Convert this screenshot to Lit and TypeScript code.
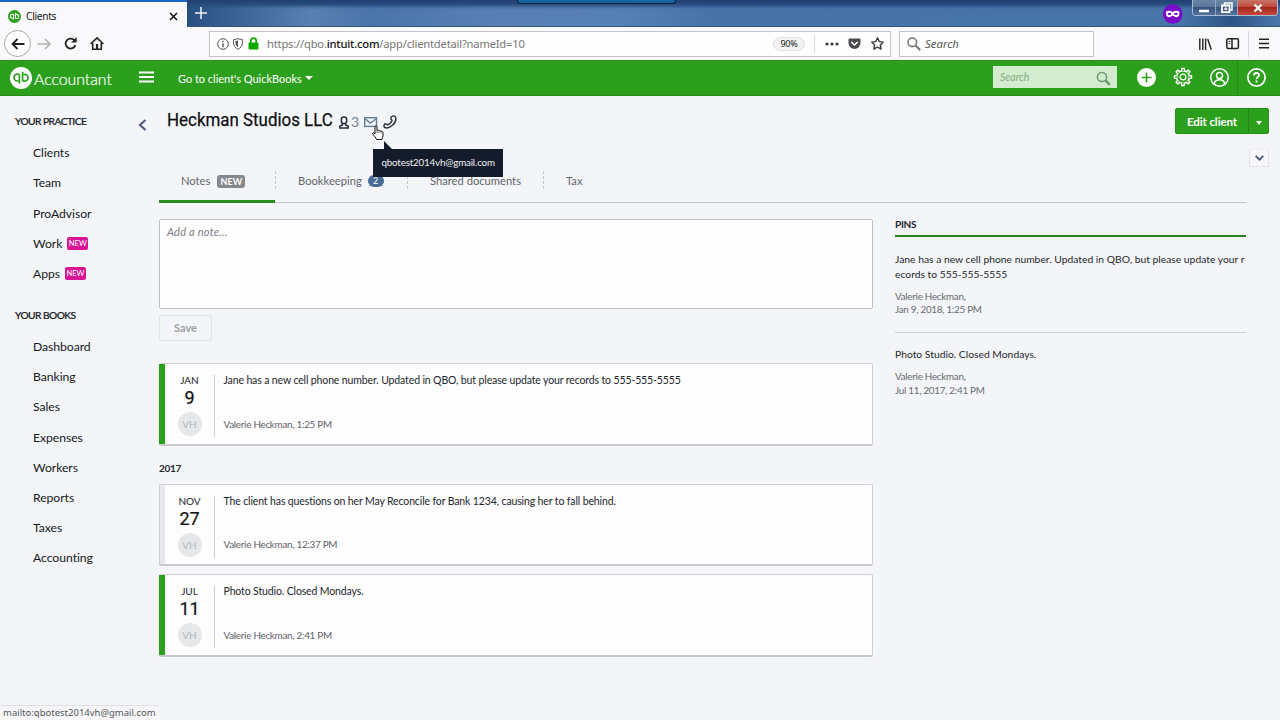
import { LitElement, html, css, svg } from 'lit';
import { customElement, property } from 'lit/decorators.js';
import { classMap } from 'lit/directives/class-map.js';

const base = css`
  :host {
    display: block;
    box-sizing: border-box;
    font-family: Lato, "Liberation Sans", sans-serif;
    color: #24272c;
    white-space: nowrap;
  }
  *, *::before, *::after {
    box-sizing: border-box;
  }
  svg {
    display: block;
    flex: none;
    overflow: visible;
  }
`;

const qbMark = (bg: string, fg: string) => svg`
  <circle cx="11" cy="11" r="11" fill=${bg}/>
  <g fill="none" stroke=${fg} stroke-width="1.7">
    <path d="M9.2 7.2H7.4a3.4 3.4 0 0 0 0 6.8h1.4"/>
    <path d="M9.4 7.2v9.4"/>
    <path d="M12.8 14.2h1.8a3.4 3.4 0 0 0 0-6.8h-1.4"/>
    <path d="M12.6 14.2V4.8"/>
  </g>
`;

@customElement('browser-chrome')
class BrowserChrome extends LitElement {
  static styles = [base, css`
    :host {
      font-family: "Noto Sans", sans-serif;
    }
    .titlebar {
      position: relative;
      display: flex;
      height: 27px;
      border-bottom: 1px solid #2f5486;
      background:
        linear-gradient(180deg, #203f70 0, #274a7c 4px, rgba(70, 112, 164, 0) 9px),
        linear-gradient(90deg, #274f80 187px, #5a80b3 310px, #4a74aa 370px, #5880b5 500px, #5580b6 620px, #4672a8 720px, #4775a9 1180px, #2d5487 1230px, #4c76ab 1280px);
    }
    .tab {
      display: flex;
      align-items: center;
      width: 187px;
      height: 28px;
      padding: 2px 9px 0 8px;
      border-top: 2px solid #1a66c2;
      background: #f9f9fb;
      font-size: 10.2px;
      letter-spacing: -0.3px;
      color: #111;
    }
    .tab .name {
      flex: 1;
      padding-left: 5px;
    }
    .plus {
      margin: 7px 0 0 8px;
    }
    .recorder {
      position: absolute;
      left: 517px;
      top: 0;
      width: 159px;
      height: 4px;
      border: 1px solid #0d1f33;
      border-top: 0;
      border-radius: 0 0 3px 3px;
      background: #1565a5;
    }
    .mask {
      position: absolute;
      left: 1163px;
      top: 4px;
    }
    .window {
      position: absolute;
      left: 1192px;
      top: 0;
      display: flex;
      height: 16px;
      width: 86px;
      border: 1px solid #a9bcd3;
      border-top: 0;
      border-radius: 0 0 4px 4px;
      overflow: hidden;
    }
    .window span {
      display: flex;
      justify-content: center;
      align-items: center;
      width: 23px;
      border-right: 1px solid #8fa6c2;
      background: linear-gradient(180deg, #6d85a5 0, #5a7599 45%, #38547c 50%, #52749f 100%);
    }
    .window span.x {
      width: 39px;
      border-right: 0;
      background: linear-gradient(180deg, #c9746a 0, #bd4a3e 45%, #a5271d 50%, #c6493a 100%);
    }
    .toolbar {
      display: flex;
      align-items: center;
      height: 33px;
      background: #f9f9fb;
      padding-left: 4px;
    }
    .back {
      display: flex;
      align-items: center;
      justify-content: center;
      width: 27px;
      height: 27px;
      border: 1px solid #a8a8aa;
      border-radius: 50%;
      background: #fdfdfd;
    }
    .forward {
      margin-left: 6px;
    }
    .reload {
      margin-left: 13px;
    }
    .home {
      margin-left: 13px;
    }
    .field {
      display: flex;
      align-items: center;
      height: 26px;
      border: 1px solid #c3c3c8;
      background: #fefefe;
    }
    .url {
      width: 682px;
      margin-left: 105px;
      padding-left: 7px;
      font-size: 11.2px;
      letter-spacing: -0.2px;
      color: #777;
    }
    .url b {
      font-weight: 500;
      color: #111;
    }
    .shield {
      margin-left: 4px;
    }
    .lock {
      margin-left: 5px;
    }
    .address {
      flex: 1;
      margin-left: 8px;
    }
    .zoom {
      width: 32px;
      height: 14px;
      margin-right: -1px;
      border: 1px solid #e2e2e4;
      border-radius: 7px;
      background: #f2f2f3;
      font-size: 9px;
      line-height: 12px;
      text-align: center;
      color: #222;
    }
    .rule {
      width: 1px;
      height: 18px;
      margin: 0 10px;
      background: #d8d8da;
    }
    .pocket {
      margin-left: 9px;
    }
    .star {
      margin: 0 6px 0 10px;
    }
    .search {
      width: 195px;
      margin-left: 8px;
      padding-left: 7px;
      font-size: 11.4px;
      font-style: italic;
      color: #555;
    }
    .search svg {
      margin-right: 4px;
    }
    .library {
      margin-left: 105px;
    }
    .sidebar {
      margin-left: 14px;
    }
    .rule.tall {
      height: 26px;
      margin: 0 10px 0 9px;
    }
  `];

  render() {
    return html`
      <div class="titlebar">
        <div class="tab">
          <svg width="13" height="13" viewBox="0 0 22 22">${qbMark('#2ca01c', '#fff')}</svg>
          <span class="name">Clients</span>
          <svg width="9" height="9" viewBox="0 0 9 9" stroke="#111" stroke-width="1.5"><path d="M1 1l7 7M8 1L1 8"/></svg>
        </div>
        <svg class="plus" width="12" height="12" viewBox="0 0 12 12" stroke="#f3f6fa" stroke-width="1.5"><path d="M6 0v12M0 6h12"/></svg>
        <div class="recorder"></div>
        <svg class="mask" width="20" height="20" viewBox="0 0 20 20">
          <circle cx="9.7" cy="10" r="9.8" fill="#7a0bc9"/>
          <path d="M3 7.6c2-1.2 4.6-.9 6.7.3 2.1-1.2 4.7-1.5 6.7-.3.4 3.6-.9 5.600-3 5.600-1.700 0-2.500-1.400-3.700-1.400s-2 1.400-3.700 1.400c-2.100 0-3.400-2-3-5.600z" fill="#fff"/>
          <ellipse cx="6.5" cy="9.9" rx="1.7" ry="1.2" fill="#7a0bc9"/><ellipse cx="12.9" cy="9.9" rx="1.7" ry="1.2" fill="#7a0bc9"/>
        </svg>
        <div class="window">
          <span><svg width="12" height="10" viewBox="0 0 12 10"><path d="M1 8h10" stroke="#fff" stroke-width="2.4"/></svg></span>
          <span><svg width="12" height="12" viewBox="0 0 12 12" fill="none" stroke="#fff" stroke-width="1.5"><path d="M3.500 3V1h7.500v7H9"/><path d="M1 3.500h7.500v6.700H1z" stroke-width="1.8"/><path d="M3.800 6h2v1.500h-2z" stroke-width="1"/></svg></span>
          <span class="x"><svg width="10" height="10" viewBox="0 0 10 10" stroke="#fff" stroke-width="2.3"><path d="M1.500 1.500l7 7M8.500 1.500l-7 7"/></svg></span>
        </div>
      </div>
      <div class="toolbar">
        <span class="back"><svg width="14" height="12" viewBox="0 0 14 12" fill="none" stroke="#222" stroke-width="1.8"><path d="M13.500 6H1.500M6.500 1L1.500 6l5 5"/></svg></span>
        <svg class="forward" width="14" height="12" viewBox="0 0 14 12" fill="none" stroke="#b1b1b3" stroke-width="1.5"><path d="M.5 6h12M8 1l5 5-5 5"/></svg>
        <svg class="reload" width="13" height="13" viewBox="0 0 13 13" fill="none" stroke="#222" stroke-width="1.8"><path d="M10.800 3.800A5 5 0 1 0 11.400 8"/><path d="M12.600 0v5.400H7.200z" fill="#222" stroke="none"/></svg>
        <svg class="home" width="14" height="13" viewBox="0 0 14 13" fill="none" stroke="#222" stroke-width="1.6"><path d="M.6 7L7 .9 13.400 7"/><path d="M2.700 6v6.200h8.600V6"/><path d="M7 7v5" stroke-width="2.2"/></svg>
        <div class="field url">
          <svg width="12" height="12" viewBox="0 0 12 12" fill="none" stroke="#555" stroke-width="1"><circle cx="6" cy="6" r="5.3"/><path d="M6 5.200v4M6 2.800v1.400" stroke-width="1.4"/></svg>
          <svg class="shield" width="10" height="12" viewBox="0 0 10 12" fill="none" stroke="#555"><path d="M.6 1.500Q3 1.500 5 .6q2 .9 4.400.9v3.600c0 3-2 5-4.400 6.300C2.600 10.100.6 8.100.6 5.100z"/><path d="M2.500 3L5 2.500v6.700C3.300 8 2.500 7 2.500 5z" fill="#555" stroke="none"/></svg>
          <svg class="lock" width="11" height="13" viewBox="0 0 11 13"><path d="M2.800 6V3.800a2.700 2.700 0 0 1 5.400 0V6" fill="none" stroke="#12a800" stroke-width="1.7"/><rect x=".5" y="5.5" width="10" height="7" rx="1" fill="#12a800"/></svg>
          <span class="address">https://qbo.<b>intuit.com</b>/app/clientdetail?nameId=10</span>
          <span class="zoom">90%</span>
          <span class="rule"></span>
          <svg width="14" height="4" viewBox="0 0 14 4" fill="#3b3b3f"><circle cx="2" cy="2" r="1.6"/><circle cx="7" cy="2" r="1.6"/><circle cx="12" cy="2" r="1.6"/></svg>
          <svg class="pocket" width="13" height="12" viewBox="0 0 13 12"><path d="M1.500.5h10a1 1 0 0 1 1 1V5a6 6 0 0 1-12 0V1.500a1 1 0 0 1 1-1z" fill="#4a4a4f"/><path d="M3.600 4.200L6.500 7l2.900-2.800" fill="none" stroke="#fff" stroke-width="1.5" stroke-linecap="round"/></svg>
          <svg class="star" width="13" height="13" viewBox="0 0 13 13" fill="none" stroke="#3b3b3f" stroke-width="1.4" stroke-linejoin="round"><path d="M6.500.8l1.800 3.800 4 .5-3 2.800.8 4.200-3.600-2.100-3.600 2.100.8-4.200-3-2.800 4-.5z"/></svg>
        </div>
        <div class="field search">
          <svg width="14" height="14" viewBox="0 0 14 14" fill="none" stroke="#777" stroke-width="1.6"><circle cx="5.3" cy="5.3" r="4.3"/><path d="M8.500 8.500l4.800 4.800" stroke-width="2"/></svg>
          <span>Search</span>
        </div>
        <svg class="library" width="13" height="12" viewBox="0 0 13 12" stroke="#222" stroke-width="1.4"><path d="M.8.500V12M3.800.500V12M6.600.500V12M8.700 1l3.600 10.800"/></svg>
        <svg class="sidebar" width="13" height="11" viewBox="0 0 13 11" fill="none" stroke="#222" stroke-width="1.5"><rect x=".8" y=".8" width="11.6" height="9.6" rx="1.5"/><path d="M6 .8v9.600"/><path d="M2.600 3.400h1.600M2.600 5.400h1.600" stroke-width="1"/></svg>
        <span class="rule tall"></span>
        <svg width="10" height="11" viewBox="0 0 10 11" stroke="#222" stroke-width="1.6"><path d="M0 1.200h10M0 5.500h10M0 9.800h10"/></svg>
      </div>
    `;
  }
}

@customElement('qb-header')
class QbHeader extends LitElement {
  static styles = [base, css`
    :host {
      display: flex;
      align-items: center;
      height: 36px;
      padding: 0 0 2px 10px;
      border-top: 1px solid #2d8d20;
      border-bottom: 1px solid #288a1b;
      background: #2ca01c;
      color: #fff;
    }
    .logo {
      margin-top: 2px;
    }
    .brand {
      margin: 2px 0 0 2px;
      width: 105px;
      font-size: 15.8px;
      font-weight: 300;
      -webkit-text-stroke: 0.2px #fff;
    }
    .client {
      margin: 2px 0 0 24px;
      font-size: 11px;
      letter-spacing: -0.02px;
    }
    .caret {
      margin: 1px 0 0 3px;
      border: 4px solid transparent;
      border-top: 4px solid #fff;
      border-bottom: 0;
    }
    .search {
      display: flex;
      align-items: center;
      justify-content: space-between;
      width: 124px;
      height: 22px;
      margin-left: auto;
      padding: 0 6px 0 7px;
      background: #d3ecd0;
      font-size: 10.5px;
      font-style: italic;
      color: #84ae80;
    }
    .search svg {
      margin-top: 3px;
    }
    .tools {
      display: flex;
      align-items: center;
      height: 34px;
      padding-left: 20px;
    }
    .tools svg + svg {
      margin-left: 18px;
    }
    .help {
      display: flex;
      align-items: center;
      height: 34px;
      margin: 0 14px 0 8px;
      padding-left: 9px;
      border-left: 1px solid #23891a;
    }
  `];

  render() {
    const teeth = [0, 45, 90, 135, 180, 225, 270, 315];
    return html`
      <svg class="logo" width="22" height="22" viewBox="0 0 22 22">${qbMark('#fff', '#2ca01c')}</svg>
      <span class="brand">Accountant</span>
      <svg width="15" height="12" viewBox="0 0 15 12" stroke="#fff" stroke-width="2"><path d="M0 1.500h15M0 6h15M0 10.500h15"/></svg>
      <span class="client">Go to client's QuickBooks</span>
      <span class="caret"></span>
      <div class="search">
        <span>Search</span>
        <svg width="15" height="15" viewBox="0 0 15 15" fill="none" stroke="#72996f"><circle cx="6" cy="6" r="4.6" stroke-width="1.5"/><path d="M9.400 9.400l4.400 4.400" stroke-width="2.6"/></svg>
      </div>
      <div class="tools">
        <svg width="19" height="19" viewBox="0 0 19 19"><circle cx="9.5" cy="9.5" r="9.5" fill="#fff"/><path d="M9.500 4.500v10M4.500 9.500h10" stroke="#2ca01c" stroke-width="1.6"/></svg>
        <svg width="18" height="18" viewBox="0 0 18 18" fill="none" stroke="#fff" stroke-width="1.4">
          <circle cx="9" cy="9" r="2.9"/>
          <circle cx="9" cy="9" r="6.3"/>
          ${teeth.map(a => svg`<path d="M7.500 2.900L7.800.5h2.400l.3 2.400" fill="#2ca01c" transform="rotate(${a} 9 9)"/>`)}
        </svg>
        <svg width="19" height="19" viewBox="0 0 19 19" fill="none" stroke="#fff" stroke-width="1.5"><circle cx="9.5" cy="9.5" r="8.7"/><circle cx="9.5" cy="7.6" r="3"/><path d="M4.300 15.800c.4-3 2.600-4 5.200-4s4.800 1 5.200 4"/></svg>
      </div>
      <div class="help">
        <svg width="19" height="19" viewBox="0 0 19 19" fill="none" stroke="#fff" stroke-width="1.7"><circle cx="9.5" cy="9.5" r="8.6"/><path d="M7 7.400c0-3.200 5-3.100 5-.2 0 1.900-2.500 1.900-2.500 4M9.500 12.600v1.800" stroke-width="1.8"/></svg>
      </div>
    `;
  }
}

interface NavItem {
  label: string;
  isNew?: boolean;
}

@customElement('side-nav')
class SideNav extends LitElement {
  static styles = [base, css`
    :host {
      width: 134px;
      padding: 18px 0 0 15px;
    }
    h2 {
      height: 16px;
      margin: 0 0 7.6px;
      font-size: 10.2px;
      font-weight: 500;
      line-height: 15px;
      letter-spacing: -0.55px;
      color: #16191d;
      -webkit-text-stroke: 0.2px #16191d;
    }
    ul {
      margin: 0 0 19.4px;
      padding: 0 0 0 18px;
      list-style: none;
    }
    li {
      display: flex;
      align-items: center;
      height: 30.2px;
      font-size: 12.2px;
      letter-spacing: -0.05px;
      color: #16191d;
    }
    .badge {
      width: 21px;
      height: 13px;
      margin-left: 5px;
      border-radius: 2px;
      background: #d81594;
      color: #fff;
      font-size: 7.6px;
      line-height: 13px;
      text-align: center;
    }
  `];

  groups: { title: string; items: NavItem[] }[] = [
    { title: 'YOUR PRACTICE', items: [
      { label: 'Clients' }, { label: 'Team' }, { label: 'ProAdvisor' },
      { label: 'Work', isNew: true }, { label: 'Apps', isNew: true },
    ] },
    { title: 'YOUR BOOKS', items: [
      'Dashboard', 'Banking', 'Sales', 'Expenses', 'Workers', 'Reports', 'Taxes', 'Accounting',
    ].map(label => ({ label })) },
  ];

  render() {
    return this.groups.map(group => html`
      <h2>${group.title}</h2>
      <ul>
        ${group.items.map(item => html`
          <li><span>${item.label}</span>${item.isNew ? html`<span class="badge">NEW</span>` : ''}</li>
        `)}
      </ul>
    `);
  }
}

@customElement('note-card')
class NoteCard extends LitElement {
  @property() month = '';
  @property() day = '';
  @property() text = '';
  @property() meta = '';
  @property({ type: Boolean }) pinned = false;

  static styles = [base, css`
    .card {
      display: flex;
      height: 82.5px;
      border: 1px solid #cfd1d5;
      border-bottom: 2px solid #c6c8cc;
      border-left: 0;
      border-radius: 2px;
      background: #fdfdfe;
    }
    .bar {
      width: 6px;
      border-left: 1px solid #cfd1d5;
      background: #e7e8eb;
    }
    .pinned .bar {
      border-left: 0;
      background: #2ca01c;
    }
    .date {
      display: flex;
      flex-direction: column;
      align-items: center;
      width: 50px;
      height: 62px;
      margin-top: 11px;
      border-right: 1px solid #cdcfd3;
      font-size: 10px;
      line-height: 11px;
    }
    .day {
      font-family: Roboto, sans-serif;
      font-size: 18px;
      line-height: 24px;
      color: #111;
      -webkit-text-stroke: 0.2px #111;
    }
    .avatar {
      width: 24px;
      height: 24px;
      margin-top: 2px;
      border-radius: 50%;
      background: #e5e7e9;
      color: #b4b7bb;
      font-size: 10px;
      line-height: 24px;
      text-align: center;
    }
    .body {
      display: flex;
      flex-direction: column;
      justify-content: space-between;
      padding: 9px 0 13px 8.5px;
      font-size: 10.5px;
      line-height: 14px;
      letter-spacing: -0.13px;
    }
    .meta {
      font-size: 9.9px;
      letter-spacing: -0.28px;
      color: #5f6267;
    }
  `];

  render() {
    return html`
      <div class=${classMap({ card: true, pinned: this.pinned })}>
        <div class="bar"></div>
        <div class="date">
          <span>${this.month}</span>
          <span class="day">${this.day}</span>
          <span class="avatar">VH</span>
        </div>
        <div class="body">
          <span>${this.text}</span>
          <span class="meta">${this.meta}</span>
        </div>
      </div>
    `;
  }
}

@customElement('client-title')
class ClientTitle extends LitElement {
  static styles = [base, css`
    :host {
      display: flex;
      align-items: center;
      height: 24px;
    }
    h1 {
      margin: 0 0 0 -1px;
      width: 172px;
      font-family: Roboto, sans-serif;
      font-size: 19px;
      font-weight: 400;
      line-height: 24px;
      color: #0c0e12;
      -webkit-text-stroke: 0.25px #0c0e12;
      transform: scaleX(0.89);
      transform-origin: left;
    }
    .count {
      margin: 4px 6px 0 2px;
      font-size: 14px;
      line-height: 16px;
      color: #6d8296;
    }
    .mail {
      position: relative;
      margin: 0 6px 0 -1px;
    }
    .tip {
      position: absolute;
      z-index: 2;
      left: 9px;
      top: 36px;
      width: 130px;
      height: 28px;
      background: #141c2b;
      color: #eef0f3;
      font-size: 9.8px;
      letter-spacing: -0.18px;
      line-height: 26px;
      text-align: center;
    }
    .tip::before {
      content: "";
      position: absolute;
      left: 11px;
      top: -8px;
      border-right: 8px solid transparent;
      border-bottom: 8px solid #141c2b;
    }
    .cursor {
      position: absolute;
      z-index: 3;
      left: 8px;
      top: 12px;
    }
    .icon {
      margin-top: 4px;
    }
  `];

  render() {
    return html`
      <h1>Heckman Studios LLC</h1>
      <svg class="icon" width="10" height="13" viewBox="0 0 10 13" fill="none" stroke="#2b2f3a" stroke-width="1.6"><rect x="2.4" y="1" width="5.2" height="6.5" rx="2.3"/><path d="M3.500 7.600v1.200L.9 10.200V12h8.200v-1.800L6.500 8.800V7.600"/></svg>
      <span class="count">3</span>
      <span class="mail">
        <svg class="icon" width="13" height="10" viewBox="0 0 13 10" fill="none" stroke="#607f9c" stroke-width="1.4"><rect x=".7" y=".7" width="11.8" height="8.700"/><path d="M1 1.800l5.600 4.300 5.600-4.300"/></svg>
        <svg class="cursor" width="12" height="15" viewBox="0 0 12 15"><path d="M3 9V1.700C3 .3 5 .3 5 1.700V5.500c.8-.7 1.700-.5 2 .3.800-.5 1.700-.2 2 .6.900-.4 2 0 2 1.200V11c0 1-1 2-1 3.500H4.500C4 12.500 1.500 10.500.8 9 .2 7.600 1.700 7 2.300 8z" fill="#fff" stroke="#111" stroke-width="1"/><path d="M5 5.500V8M7 6v2M9 6.500V8.500" stroke="#333" stroke-width=".7"/></svg>
        <span class="tip">qbotest2014vh@gmail.com</span>
      </span>
      <svg class="icon" width="14" height="14" viewBox="0 0 14 14" fill="none" stroke="#2b2f3a" stroke-width="1.4" stroke-linejoin="round"><path d="M9 1.300c1.600-1 3.700.1 3.900 2 .2 2.200-1 4.800-3.200 6.800-2.200 2-4.900 3.200-7.100 2.700C.9 12.400.5 10.700 1.300 9.600c.5-.7 1.400-.9 2.100-.5l1.500.8c1.700-.9 3.300-2.400 4.200-4.300L8 4c-.6-.9-.1-2.100 1-2.700z"/></svg>
    `;
  }
}

@customElement('client-tabs')
class ClientTabs extends LitElement {
  static styles = [base, css`
    :host {
      display: flex;
      width: 1088px;
      height: 32px;
      border-bottom: 1px solid #c3c5ca;
      font-size: 11.2px;
      line-height: 19px;
      color: #62666c;
    }
    .tab {
      display: flex;
      height: 32px;
      padding-left: 22px;
    }
    .tab::after {
      content: "";
      height: 18px;
      margin: 0 -1px 0 auto;
      border-right: 1px dashed #c2c4c9;
    }
    .tab:last-child::after {
      display: none;
    }
    .notes {
      width: 116px;
      border-bottom: 3px solid #2a8c1f;
    }
    .books {
      width: 132px;
      padding-left: 23px;
    }
    .docs {
      width: 136px;
      padding-left: 23px;
    }
    .tax {
      padding-left: 23px;
    }
    .new {
      width: 28px;
      height: 13px;
      margin: 4px 0 0 7px;
      border-radius: 3px;
      background: #85888d;
      color: #fff;
      font-size: 9px;
      font-weight: 700;
      line-height: 13px;
      text-align: center;
    }
    .num {
      width: 16px;
      height: 12px;
      margin: 4px 0 0 6px;
      border-radius: 6px;
      background: #456b96;
      color: #fff;
      font-size: 9px;
      line-height: 12px;
      text-align: center;
    }
  `];

  render() {
    return html`
      <div class="tab notes">Notes<span class="new">NEW</span></div>
      <div class="tab books">Bookkeeping<span class="num">2</span></div>
      <div class="tab docs">Shared documents</div>
      <div class="tab tax">Tax</div>
    `;
  }
}

@customElement('pins-panel')
class PinsPanel extends LitElement {
  static styles = [base, css`
    :host {
      width: 351px;
    }
    h2 {
      height: 18px;
      margin: 0;
      border-bottom: 2px solid #2a8420;
      font-size: 10px;
      font-weight: 700;
      line-height: 10px;
      letter-spacing: -0.3px;
    }
    .pin {
      height: 96px;
      padding-top: 15px;
      border-bottom: 1px solid #d0d2d6;
      font-size: 10.3px;
      line-height: 14.5px;
      letter-spacing: 0.01px;
      white-space: pre;
    }
    .pin:last-child {
      padding-top: 14px;
      border-bottom: 0;
    }
    .meta {
      margin-top: 8.5px;
      font-size: 9.8px;
      line-height: 13.5px;
      letter-spacing: -0.25px;
      color: #666a70;
    }
  `];

  pins = [
    { text: 'Jane has a new cell phone number. Updated in QBO, but please update your r\necords to 555-555-5555', meta: 'Valerie Heckman,\nJan 9, 2018, 1:25 PM' },
    { text: 'Photo Studio. Closed Mondays.', meta: 'Valerie Heckman,\nJul 11, 2017, 2:41 PM' },
  ];

  render() {
    return html`
      <h2>PINS</h2>
      ${this.pins.map(pin => html`<div class="pin"><div>${pin.text}</div><div class="meta">${pin.meta}</div></div>`)}
    `;
  }
}

@customElement('app-root')
class AppRoot extends LitElement {
  static styles = [base, css`
    :host {
      position: relative;
      width: 1280px;
      height: 720px;
      overflow: hidden;
      background: #f4f5f8;
    }
    .page {
      display: flex;
    }
    .collapse {
      width: 25px;
      padding: 23px 0 0 4px;
    }
    main {
      flex: 1;
    }
    .top {
      display: flex;
      justify-content: space-between;
      height: 75px;
      padding: 12px 11px 0 9px;
    }
    .actions {
      display: flex;
      flex-direction: column;
      align-items: flex-end;
    }
    .edit {
      display: flex;
      width: 94px;
      height: 26px;
      border: 1px solid #26901a;
      border-radius: 2px;
      background: #2ca01c;
      color: #fff;
      font-size: 11.5px;
      font-weight: 700;
      line-height: 25px;
      letter-spacing: -0.1px;
    }
    .edit .text {
      flex: 1;
      text-align: center;
    }
    .edit .drop {
      display: flex;
      align-items: center;
      justify-content: center;
      width: 20px;
      border-left: 1px solid #238418;
    }
    .drop i {
      margin-top: 3px;
      border: 3px solid transparent;
      border-top: 4px solid #fff;
      border-bottom: 0;
    }
    .expand {
      display: flex;
      align-items: center;
      justify-content: center;
      width: 20px;
      height: 18px;
      margin-top: 15px;
      border: 1px solid #e3e4ea;
      border-top-color: #f0f0f4;
      background: #f8f8fb;
    }
    .columns {
      display: flex;
      gap: 22px;
      padding-top: 16px;
    }
    .notes {
      width: 714px;
    }
    .input {
      height: 90px;
      padding: 4px 7px;
      border: 1px solid #bfc1c6;
      border-radius: 2px;
      background: #fdfdfe;
      font-size: 11px;
      font-style: italic;
      line-height: 15px;
      letter-spacing: 0.25px;
      color: #7d8085;
    }
    .save {
      width: 53px;
      height: 26px;
      margin: 6px 0 22px;
      border: 1px solid #e2e4e8;
      border-radius: 2px;
      font-size: 11px;
      font-weight: 700;
      line-height: 24px;
      text-align: center;
      color: #9fa2a7;
    }
    .year {
      height: 38px;
      padding-top: 14px;
      font-size: 10px;
      font-weight: 700;
      line-height: 17px;
      letter-spacing: -0.3px;
    }
    note-card + note-card {
      margin-top: 8px;
    }
    .status {
      position: absolute;
      left: 0;
      bottom: 0;
      height: 15px;
      padding: 0 3px;
      border-top: 1px solid #e0e1e4;
      background: #f6f6f9;
      font-family: "Noto Sans", sans-serif;
      font-size: 9.5px;
      line-height: 14px;
      color: #55585c;
    }
  `];

  render() {
    return html`
      <browser-chrome></browser-chrome>
      <qb-header></qb-header>
      <div class="page">
        <side-nav></side-nav>
        <div class="collapse">
          <svg width="9" height="12" viewBox="0 0 9 12" fill="none" stroke="#555c86" stroke-width="2.2"><path d="M7.500 1L2 6l5.500 5"/></svg>
        </div>
        <main>
          <div class="top">
            <client-title></client-title>
            <div class="actions">
              <div class="edit"><span class="text">Edit client</span><span class="drop"><i></i></span></div>
              <div class="expand"><svg width="9" height="6" viewBox="0 0 9 6" fill="none" stroke="#4e5480" stroke-width="1.9"><path d="M.7.800l3.800 3.800L8.300.800"/></svg></div>
            </div>
          </div>
          <client-tabs></client-tabs>
          <div class="columns">
            <div class="notes">
              <div class="input">Add a note...</div>
              <div class="save">Save</div>
              <note-card pinned month="JAN" day="9" meta="Valerie Heckman, 1:25 PM"
                text="Jane has a new cell phone number. Updated in QBO, but please update your records to 555-555-5555"></note-card>
              <div class="year">2017</div>
              <note-card month="NOV" day="27" meta="Valerie Heckman, 12:37 PM"
                text="The client has questions on her May Reconcile for Bank 1234, causing her to fall behind."></note-card>
              <note-card pinned month="JUL" day="11" meta="Valerie Heckman, 2:41 PM"
                text="Photo Studio. Closed Mondays."></note-card>
            </div>
            <pins-panel></pins-panel>
          </div>
        </main>
      </div>
      <div class="status">mailto:qbotest2014vh@gmail.com</div>
    `;
  }
}
